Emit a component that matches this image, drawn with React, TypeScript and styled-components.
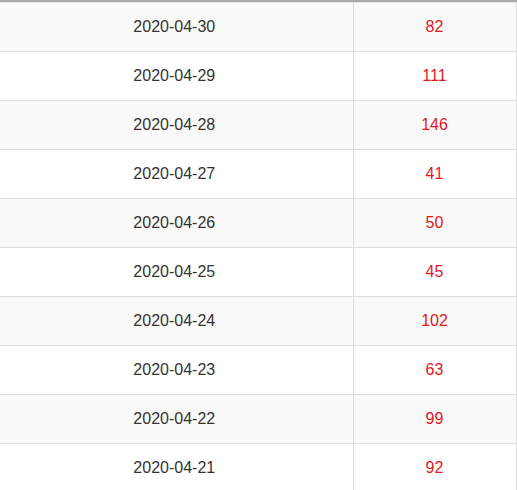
import React from 'react';
import styled, { createGlobalStyle } from 'styled-components';

const GlobalStyle = createGlobalStyle`
  body {
    margin: 0;
    background: #fff;
    font-family: Arial, "Liberation Sans", sans-serif;
  }
`;

const Wrapper = styled.div`
  width: 517px;
  height: 490px;
  overflow: hidden;
  border-top: 2px solid #a9a9a9;
  box-sizing: border-box;
`;

const Table = styled.table`
  margin-left: -4px;
  width: 520px;
  border-collapse: collapse;
  table-layout: fixed;
  border-top: 1px solid #e6e6e6;
`;

const Row = styled.tr<{ $striped: boolean }>`
  background-color: ${(p) => (p.$striped ? '#f9f9f9' : '#fff')};
`;

const Cell = styled.td`
  height: 48px;
  padding: 0;
  text-align: center;
  vertical-align: middle;
  font-size: 16px;
  color: #333;
  border-bottom: 1px solid #ddd;
  border-right: 1px solid #ddd;
`;

const CountCell = styled(Cell)`
  color: #e4171b;
`;

const rows: [string, number][] = [
  ['2020-04-30', 82],
  ['2020-04-29', 111],
  ['2020-04-28', 146],
  ['2020-04-27', 41],
  ['2020-04-26', 50],
  ['2020-04-25', 45],
  ['2020-04-24', 102],
  ['2020-04-23', 63],
  ['2020-04-22', 99],
  ['2020-04-21', 92],
];

const App: React.FC = () => (
  <Wrapper>
    <GlobalStyle />
    <Table>
      <colgroup>
        <col style={{ width: 357 }} />
        <col style={{ width: 163 }} />
      </colgroup>
      <tbody>
        {rows.map(([date, count], i) => (
          <Row key={date} $striped={i % 2 === 0}>
            <Cell>{date}</Cell>
            <CountCell>{count}</CountCell>
          </Row>
        ))}
      </tbody>
    </Table>
  </Wrapper>
);

export default App;
